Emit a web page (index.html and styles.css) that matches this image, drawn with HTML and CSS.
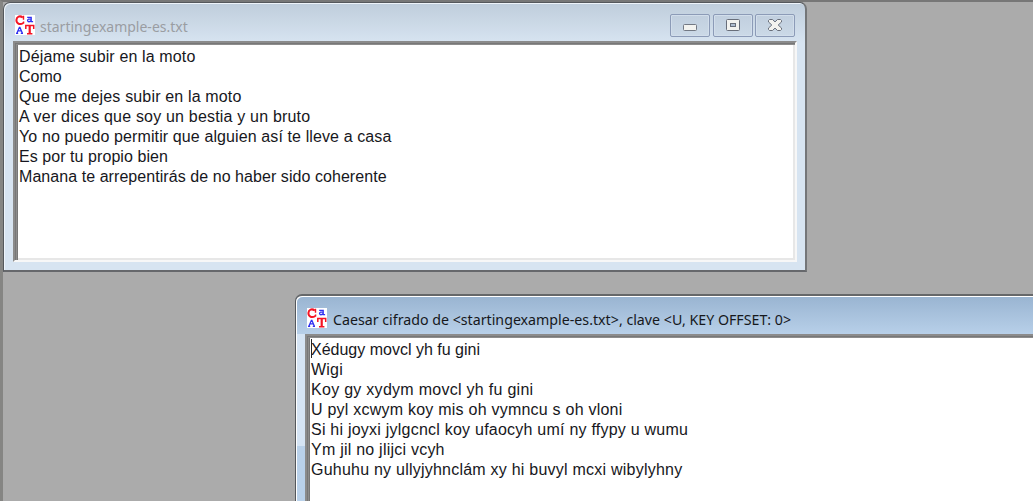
FILE: index.html
```html
<!DOCTYPE html>
<html lang="es">
<head>
<meta charset="utf-8">
<title>CrypTool</title>
<link rel="stylesheet" href="styles.css">
</head>
<body>
<svg class="defs" width="0" height="0" aria-hidden="true">
  <symbol id="app-icon" viewBox="0 0 20 20">
    <rect width="20" height="20" fill="#fff"/>
    <g fill="none" stroke="#f51424">
      <path stroke-width="2" d="M7.800 2.500C4.800.2 1.500 1.700 1.400 5.100c0 3.700 3.400 5 7 2.900"/>
      <path stroke-width="1.400" d="M8.500.700v4M8.600 6.500v2"/>
      <path stroke-width="2.200" d="M14.700 10v8.500"/>
      <path stroke-width="1.500" d="M10.800 14v-3.500h7.900V14M12 18.800h5.400"/>
    </g>
    <g fill="none" stroke="#3030f0" stroke-width="1.300">
      <path d="M12.200 2.300h4v4.400h1.900M16 4.200h-2.600q-1.700 1 0 2.500 1.800.3 2.800-1.400"/>
      <path d="M2 18l2.400-5.700h.5L7.300 18M3.200 15.800h3M1 18.300h2.200M5.800 18.300H8"/>
    </g>
  </symbol>
</svg>
<main class="desktop">
  <section class="window source">
    <header class="titlebar">
      <svg class="icon"><use href="#app-icon"/></svg>
      <h1 class="title"><span>startingexample-es.txt</span></h1>
      <div class="controls">
        <button class="control" aria-label="Minimizar"><svg width="38" height="21" viewBox="0 0 38 21"><rect x="12.500" y="9.500" width="13" height="6" rx="1" fill="#f3f3f0" stroke="#737984"/></svg></button>
        <button class="control" aria-label="Maximizar"><svg width="38" height="21" viewBox="0 0 38 21"><rect x="12.500" y="4.500" width="13" height="11" rx="1" fill="#f3f3f0" stroke="#686e7a"/><rect x="16.500" y="8.500" width="5" height="3" fill="#aebdd0" stroke="#686e7a"/></svg></button>
        <button class="control" aria-label="Cerrar"><svg width="38" height="21" viewBox="0 0 38 21"><path d="M12.500 5.500l1-1h3L19 6.900l2.500-2.400h3l1 1v1.500l-3.300 3 3.300 3v1.500l-1 1h-3L19 13.100l-2.500 2.400h-3l-1-1V13l3.300-3-3.300-3z" fill="#f3f3f0" stroke="#686e7a"/></svg></button>
      </div>
    </header>
    <div class="editor">
      <p class="ls-13">Déjame subir en la moto</p>
      <p>Como</p>
      <p class="ls-16">Que me dejes subir en la moto</p>
      <p class="ls-19">A ver dices que soy un bestia y un bruto</p>
      <p class="ls-11">Yo no puedo permitir que alguien así te lleve a casa</p>
      <p class="ls-6">Es por tu propio bien</p>
      <p class="ls-6">Manana te arrepentirás de no haber sido coherente</p>
    </div>
  </section>
  <section class="window cipher">
    <header class="titlebar">
      <svg class="icon"><use href="#app-icon"/></svg>
      <h1 class="title"><span>Caesar cifrado de &lt;startingexample-es.txt&gt;, clave &lt;U, KEY OFFSET: 0&gt;</span></h1>
    </header>
    <div class="editor">
      <i class="caret"></i>
      <p>Xédugy movcl yh fu gini</p>
      <p class="ls-23">Wigi</p>
      <p class="ls-28">Koy gy xydym movcl yh fu gini</p>
      <p class="ls-23">U pyl xcwym koy mis oh vymncu s oh vloni</p>
      <p class="ls-23">Si hi joyxi jylgcncl koy ufaocyh umí ny ffypy u wumu</p>
      <p class="ls-23">Ym jil no jlijci vcyh</p>
      <p class="ls-23">Guhuhu ny ullyjyhnclám xy hi buvyl mcxi wibylyhny</p>
    </div>
  </section>
</main>
</body>
</html>
```

FILE: styles.css
```css
* { box-sizing: border-box; }
body { margin: 0; }
.defs { position: absolute; }
.desktop {
  position: relative;
  width: 1033px;
  height: 501px;
  overflow: hidden;
  background: #ababab;
  border-top: 2px solid #777;
  border-left: 3px solid #858583;
}
.window {
  position: absolute;
  display: flex;
  flex-direction: column;
  border: 1px solid #55585c;
  border-radius: 7px 7px 0 0;
}
.source {
  left: 0;
  top: 0;
  width: 804px;
  height: 270px;
  padding: 0 8px 8px 9px;
  border-right: 2px solid #747678;
  border-bottom: 2px solid #66686c;
  background: linear-gradient(#bfcddb, #d7e4f1 40px);
  box-shadow: inset 1px 1px #eef4fa;
}
.cipher {
  left: 292px;
  top: 292px;
  width: 800px;
  height: 270px;
  padding: 0 9px 9px;
  border-top: 2px solid #66686a;
  background:
    linear-gradient(#d5e4f4, #d5e4f4) 0 38px / 9px 112px no-repeat,
    linear-gradient(#99b4d1, #b9d1ea 40px);
  box-shadow: inset 1px 1px #fff;
}
.titlebar {
  display: flex;
  align-items: center;
  flex: none;
  height: 38px;
  padding: 6px 2px 0 2px;
}
.cipher .titlebar { padding-top: 5px; }
.icon { width: 20px; height: 20px; flex: none; }
.title {
  flex: 1;
  margin: 0 0 0 5px;
  font: 400 15px/20px "Noto Sans", "Open Sans", sans-serif;
  color: #9a9da2;
  white-space: nowrap;
}
.title span {
  display: inline-block;
  transform: translateY(1px) scaleX(.933);
  transform-origin: 0 50%;
}
.cipher .title { color: #16181c; margin-left: 6px; }
.cipher .title span { transform: translateY(1px) scaleX(.947); }
.controls { display: flex; gap: 2.500px; }
.control {
  width: 40px;
  height: 23px;
  padding: 0;
  border: 1px solid #8c9bb7;
  border-radius: 2px;
  background: linear-gradient(#c1cfde, #cbd9e7);
  box-shadow: inset 0 0 0 1px #d2deeb;
}
.control svg { display: block; }
.editor {
  position: relative;
  flex: 1;
  padding: 4px 2px;
  border: 2px solid;
  border-color: #8b8b8b #f7f7f7 #f7f7f7 #8b8b8b;
  box-shadow: inset 1px 1px #777, inset 2px 2px #8d8d8d, inset 3px 2px #777, inset -2px -2px #e7e7e7;
  background: #fff;
  font: 16px/20px "Liberation Sans", Arial, sans-serif;
  color: #171721;
}
.editor p { margin: 0; padding-left: 2px; white-space: nowrap; }
.ls-6 { letter-spacing: .06px; }
.ls-11 { letter-spacing: .11px; }
.ls-13 { letter-spacing: .13px; }
.ls-16 { letter-spacing: .16px; }
.ls-19 { letter-spacing: .19px; }
.ls-23 { letter-spacing: .23px; }
.ls-28 { letter-spacing: .28px; }
.caret {
  position: absolute;
  left: 4px;
  top: 3px;
  width: 1px;
  height: 19px;
  background: #222;
}
```
